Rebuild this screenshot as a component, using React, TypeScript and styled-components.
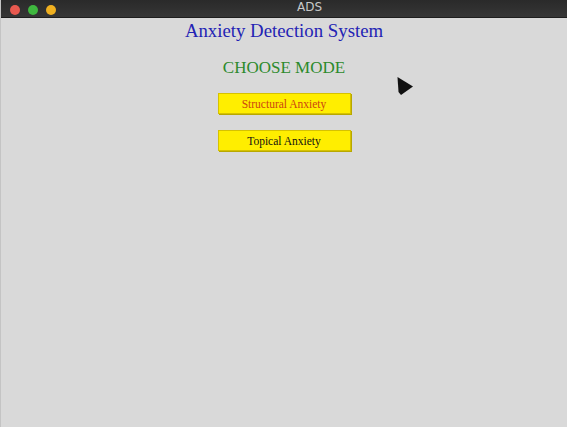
import React from "react";
import styled, { createGlobalStyle } from "styled-components";

const Global = createGlobalStyle`
  html, body { margin: 0; padding: 0; background: #d9d9d9; }
  body { width: 567px; height: 427px; overflow: hidden; }
`;

const Window = styled.div`
  width: 567px;
  height: 427px;
  display: flex;
  flex-direction: column;
  background: #d9d9d9;
  border-left: 1px solid #c4c4c4;
  box-sizing: border-box;
`;

const TitleBar = styled.div`
  height: 17px;
  flex: none;
  background: linear-gradient(#2a2a2a, #363636);
  display: flex;
  align-items: center;
  position: relative;
  border-bottom: 1px solid #1e1e1e;
`;

const Lights = styled.div`
  display: flex;
  gap: 8px;
  padding-left: 9px;
  padding-top: 2px;
`;

const Light = styled.span<{ $c: string }>`
  width: 10px;
  height: 10px;
  border-radius: 50%;
  background: ${(p) => p.$c};
`;

const TitleText = styled.div`
  position: absolute;
  left: 296px;
  top: 0;
  font-family: "DejaVu Sans", sans-serif;
  font-size: 12px;
  line-height: 15px;
  color: #c8c8c8;
`;

const Content = styled.div`
  flex: 1;
  display: flex;
  flex-direction: column;
  align-items: center;
  position: relative;
  font-family: "Liberation Serif", serif;
`;

const Heading = styled.div`
  margin-top: 2px;
  font-size: 18.8px;
  line-height: 22px;
  color: #2323b4;
`;

const Mode = styled.div`
  margin-top: 16px;
  font-size: 17px;
  line-height: 19px;
  color: #2c8a2c;
`;

const Button = styled.div<{ $color: string; $top: number }>`
  margin-top: ${(p) => p.$top}px;
  width: 131px;
  height: 19px;
  background: #ffee00;
  border: 1px solid #d6c200;
  box-shadow: 1px 1px 0 #b8a800;
  display: flex;
  align-items: center;
  justify-content: center;
  font-size: 11.5px;
  color: ${(p) => p.$color};
`;

const Cursor = styled.svg`
  position: absolute;
  left: 396px;
  top: 59px;
`;

export default function App() {
  return (
    <>
      <Global />
      <Window>
        <TitleBar>
          <Lights>
            <Light $c="#e8594f" />
            <Light $c="#3fb83f" />
            <Light $c="#f0b020" />
          </Lights>
          <TitleText>ADS</TitleText>
        </TitleBar>
        <Content>
          <Heading>Anxiety Detection System</Heading>
          <Mode>CHOOSE MODE</Mode>
          <Button $color="#cc4410" $top={16}>Structural Anxiety</Button>
          <Button $color="#111111" $top={16}>Topical Anxiety</Button>
          <Cursor width="18" height="20" viewBox="0 0 18 20">
            <path d="M0.5 0 L16 9.5 L4 18 L1.5 15 Z" fill="#111" />
          </Cursor>
        </Content>
      </Window>
    </>
  );
}
